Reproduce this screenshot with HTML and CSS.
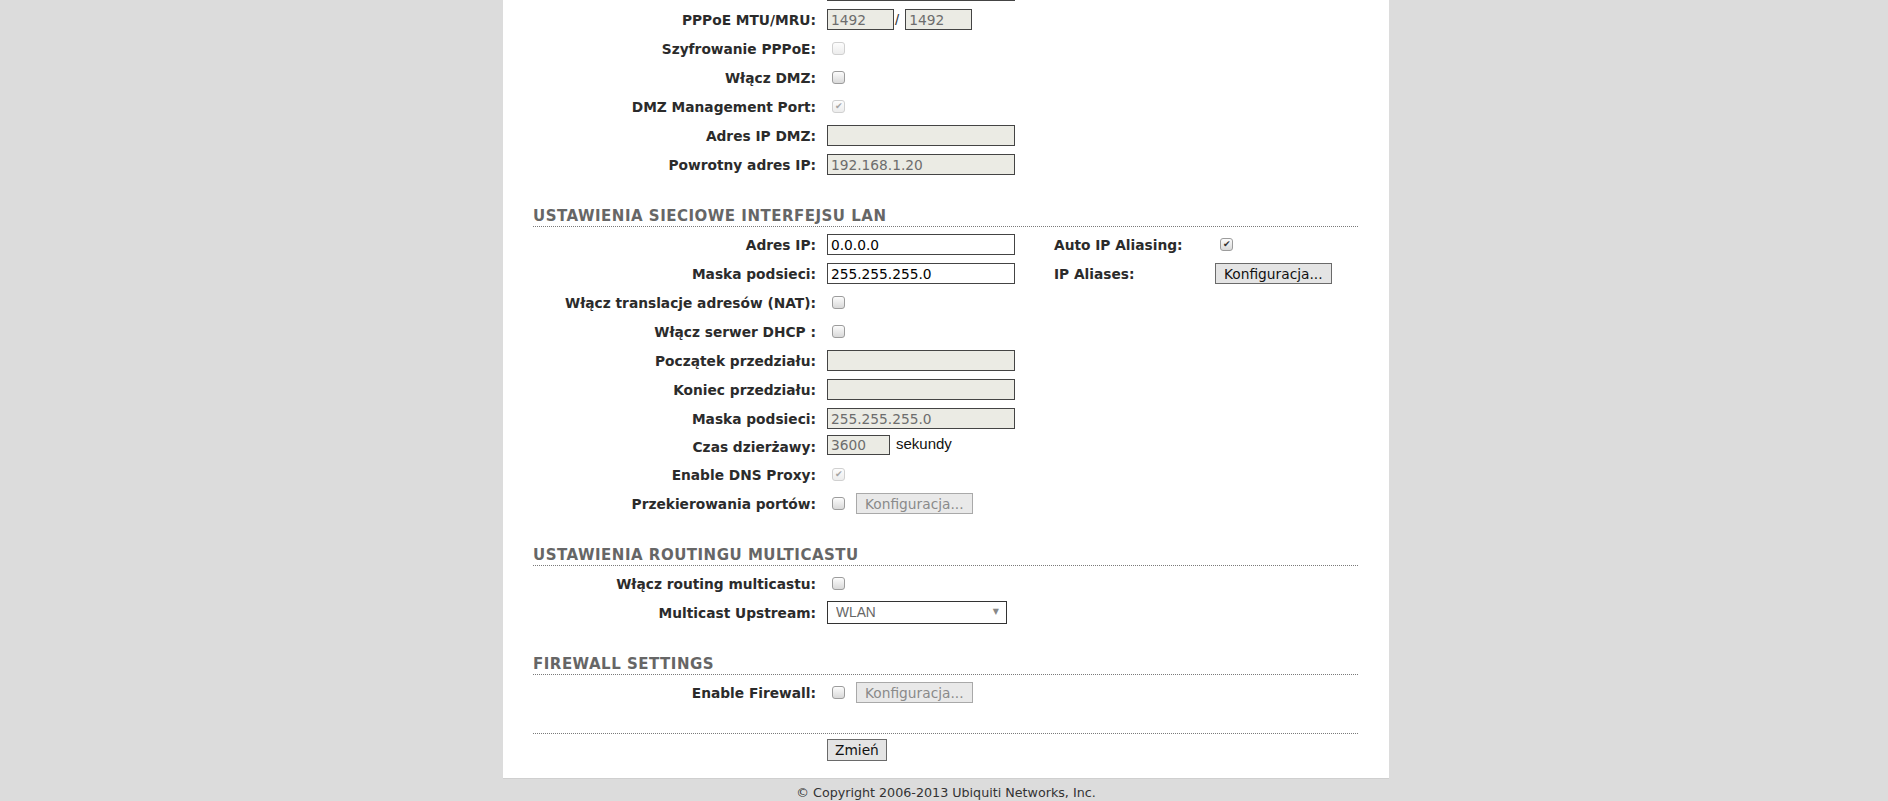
FILE: index.html
```html
<!DOCTYPE html>
<html lang="pl">

<head>
  <meta charset="utf-8" />
  <title>Sieć</title>
  <meta name="viewport" content="width=device-width, initial-scale=1">
  <link rel="stylesheet" href="styles.css">
</head>

<body>
  <div class="page">
    <form class="panel">
      <div class="form">
        <!-- end of the PPPoE block, scrolled above the fold -->
        <div class="row">
          <label></label>
          <div class="v"><input type="text" class="wide" value=""></div>
        </div>
        <div class="row">
          <label>PPPoE MTU/MRU:</label>
          <div class="v">
            <input type="text" class="mtu" value="1492" disabled><span class="slash">/</span><input type="text" class="mtu" value="1492" disabled>
          </div>
        </div>
        <div class="row">
          <label>Szyfrowanie PPPoE:</label>
          <div class="v"><input type="checkbox" disabled></div>
        </div>
        <div class="row">
          <label>Włącz DMZ:</label>
          <div class="v"><input type="checkbox"></div>
        </div>
        <div class="row">
          <label>DMZ Management Port:</label>
          <div class="v"><input type="checkbox" checked disabled></div>
        </div>
        <div class="row">
          <label>Adres IP DMZ:</label>
          <div class="v"><input type="text" class="wide" value="" disabled></div>
        </div>
        <div class="row">
          <label>Powrotny adres IP:</label>
          <div class="v"><input type="text" class="wide" value="192.168.1.20" disabled></div>
        </div>
      </div>

      <h2 class="title">USTAWIENIA SIECIOWE INTERFEJSU LAN</h2>
      <div class="form">
        <div class="row">
          <label>Adres IP:</label>
          <div class="v"><input type="text" class="wide" value="0.0.0.0"></div>
          <label class="f2">Auto IP Aliasing:</label>
          <div class="v"><input type="checkbox" checked></div>
        </div>
        <div class="row">
          <label>Maska podsieci:</label>
          <div class="v"><input type="text" class="wide" value="255.255.255.0"></div>
          <label class="f2">IP Aliases:</label>
          <div class="v"><button type="button" class="btn">Konfiguracja...</button></div>
        </div>
        <div class="row">
          <label>Włącz translacje adresów (NAT):</label>
          <div class="v"><input type="checkbox"></div>
        </div>
        <div class="row">
          <label>Włącz serwer DHCP :</label>
          <div class="v"><input type="checkbox"></div>
        </div>
        <div class="row">
          <label>Początek przedziału:</label>
          <div class="v"><input type="text" class="wide" value="" disabled></div>
        </div>
        <div class="row">
          <label>Koniec przedziału:</label>
          <div class="v"><input type="text" class="wide" value="" disabled></div>
        </div>
        <div class="row">
          <label>Maska podsieci:</label>
          <div class="v"><input type="text" class="wide" value="255.255.255.0" disabled></div>
        </div>
        <div class="row lease">
          <label>Czas dzierżawy:</label>
          <div class="v"><input type="text" class="short" value="3600" disabled><span class="unit">sekundy</span></div>
        </div>
        <div class="row">
          <label>Enable DNS Proxy:</label>
          <div class="v"><input type="checkbox" checked disabled></div>
        </div>
        <div class="row">
          <label>Przekierowania portów:</label>
          <div class="v"><input type="checkbox"><button type="button" class="btn" disabled>Konfiguracja...</button></div>
        </div>
      </div>

      <h2 class="title">USTAWIENIA ROUTINGU MULTICASTU</h2>
      <div class="form">
        <div class="row">
          <label>Włącz routing multicastu:</label>
          <div class="v"><input type="checkbox"></div>
        </div>
        <div class="row">
          <label>Multicast Upstream:</label>
          <div class="v">
            <span class="select"><select>
                <option>WLAN</option>
                <option>LAN</option>
              </select></span>
          </div>
        </div>
      </div>

      <h2 class="title">FIREWALL SETTINGS</h2>
      <div class="form">
        <div class="row">
          <label>Enable Firewall:</label>
          <div class="v"><input type="checkbox"><button type="button" class="btn" disabled>Konfiguracja...</button></div>
        </div>
      </div>

      <div class="actions">
        <span></span>
        <div class="v"><button type="submit" class="btn submit">Zmień</button></div>
      </div>
    </form>
    <div class="footer">© Copyright 2006-2013 Ubiquiti Networks, Inc.</div>
  </div>
</body>

</html>
```

FILE: styles.css
```css
* {
  box-sizing: border-box;
}

body {
  margin: 0;
  padding-left: 4px;
  background: #dcdcdc;
  font-family: "DejaVu Sans", Verdana, sans-serif;
  color: #2b2b2b;
}

.page {
  width: 886px;
  margin: 0 auto;
}

/* page is scrolled a little, the first row sits above the fold */
.panel {
  display: block;
  margin-top: -24px;
  padding: 0 31px 17px 30px;
  background: #fff;
  border-bottom: 1px solid #cfcfcf;
}

.title {
  margin: 29px 0 3px;
  padding-bottom: 1px;
  border-bottom: 1px dotted #7a7a7a;
  font-size: 15px;
  line-height: 17px;
  letter-spacing: .5px;
  color: #666;
}

.row {
  display: grid;
  grid-template-columns: 294px 227px 161px auto;
  align-items: center;
  height: 29px;
}
.row label {
  font-size: 13.75px;
  font-weight: bold;
  white-space: nowrap;
}
.row label:first-child {
  padding-right: 11px;
  text-align: right;
}
.row.lease {
  height: 27px;
}
.row.lease input {
  margin-bottom: 4px;
}

.v {
  display: flex;
  align-items: center;
}

input[type="text"] {
  height: 21px;
  margin: 0;
  padding: 0 3px;
  border: 1px solid #444;
  background: #fff;
  font: 13.75px "DejaVu Sans", Verdana, sans-serif;
  color: #000;
}
input[type="text"]:disabled {
  background: #ebebe4;
  color: #6d6d6d;
}
input.wide {
  width: 188px;
}
input.mtu {
  width: 67px;
}
input.short {
  width: 63px;
  height: 20px;
}

.slash {
  margin: 0 6px 0 1px;
  font: 15px "Liberation Sans", Arial, sans-serif;
  color: #333;
}
.unit {
  margin: 0 0 6px 6px;
  font: 15px "Liberation Sans", Arial, sans-serif;
  color: #111;
}

/* old style grey checkboxes */
input[type="checkbox"] {
  appearance: none;
  display: grid;
  place-items: center;
  width: 13px;
  height: 13px;
  margin: 0 0 0 5px;
  border: 1px solid #9c9c9c;
  border-radius: 3px;
  background: linear-gradient(#fcfcfc, #d9d9d9);
}
input[type="checkbox"]:checked::after {
  content: "\2714";
  font-size: 9px;
  line-height: 1;
  color: #333;
}
input[type="checkbox"]:disabled {
  border-color: #d0d0d0;
  background: linear-gradient(#fdfdfd, #ececec);
}
input[type="checkbox"]:disabled:checked::after {
  color: #a5a5a5;
}

.btn {
  height: 21px;
  margin: 0;
  padding: 0 8px;
  border: 1px solid #6a6a6a;
  background: #e4e4e4;
  font: 13.75px "DejaVu Sans", Verdana, sans-serif;
  color: #111;
}
.btn:disabled {
  border-color: #a9a9a9;
  background: #e9e9e9;
  color: #8a8a8a;
}
.v input[type="checkbox"] + .btn {
  margin-left: 11px;
}
.btn.submit {
  height: 22px;
  padding: 0 7px;
}

.select {
  position: relative;
  display: inline-block;
}
.select select {
  appearance: none;
  width: 180px;
  height: 23px;
  margin: 0;
  padding: 0 0 0 8px;
  border: 1px solid #333;
  border-radius: 0;
  background: #fff;
  font: 13.75px "Liberation Sans", Arial, sans-serif;
  color: #666;
}
.select:after {
  content: "\25BC";
  position: absolute;
  right: 8px;
  top: 6px;
  font-size: 8px;
  color: #888;
  pointer-events: none;
}

.actions {
  display: grid;
  grid-template-columns: 294px auto;
  margin-top: 26px;
  padding-top: 5px;
  border-top: 1px dotted #7a7a7a;
}

.footer {
  padding-top: 5px;
  font-size: 12.7px;
  line-height: 18px;
  text-align: center;
  color: #333;
}
```
